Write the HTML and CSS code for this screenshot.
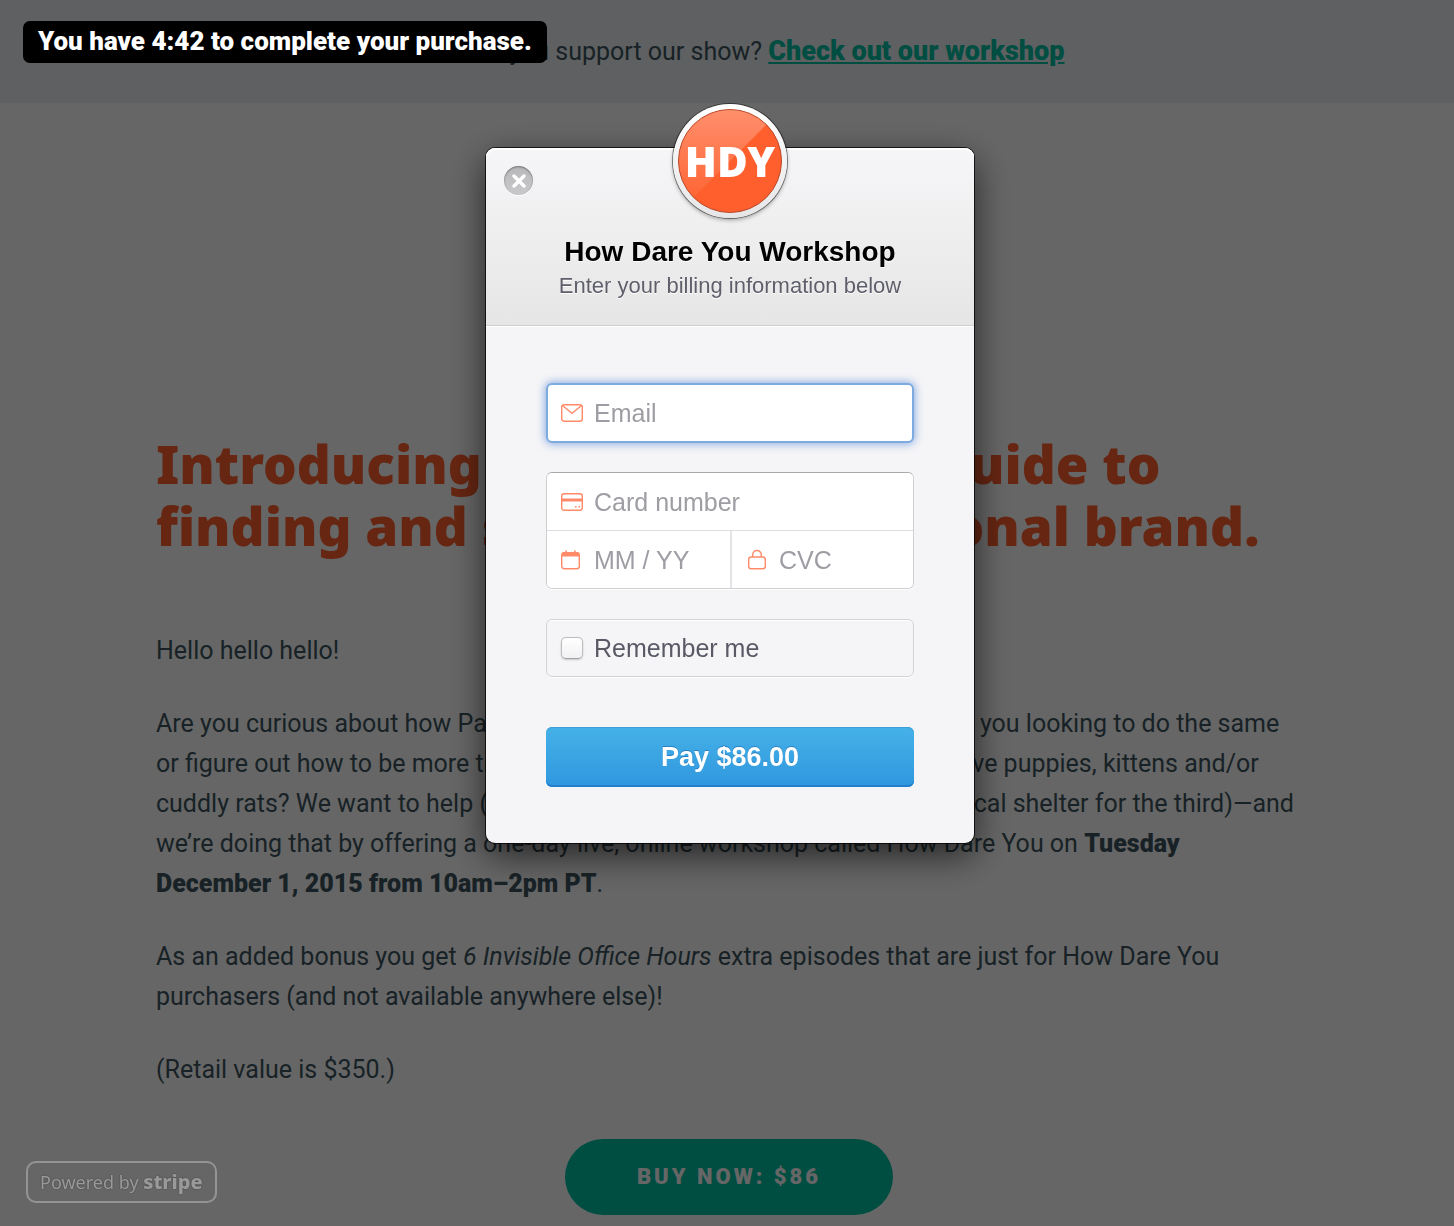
FILE: index.html
```html
<!DOCTYPE html>
<html lang="en">
<head>
<meta charset="utf-8">
<meta name="viewport" content="width=device-width, initial-scale=1">
<title>How Dare You Workshop</title>
<link rel="stylesheet" href="styles.css">
</head>
<body>
<header class="promo">
  <p>When can you support our show? <a href="#workshop">Check out our workshop</a></p>
</header>
<main class="content" id="workshop">
  <h1>Introducing your affordable guide to<br>finding and setting your personal brand.</h1>
  <p>Hello hello hello!</p>
  <p>Are you curious about how Paul and Jason built their own fair brands? Are you looking to do the same<br>
  or figure out how to be more true to yourself online? Or do you even just love puppies, kittens and/or<br>
  cuddly rats? We want to help (with the first two, then please go see your local shelter for the third)—and<br>
  we’re doing that by offering a one-day live, online workshop called How Dare You on <strong>Tuesday<br>
  December 1, 2015 from 10am–2pm PT</strong>.</p>
  <p>As an added bonus you get <em>6 Invisible Office Hours</em> extra episodes that are just for How Dare You<br>
  purchasers (and not available anywhere else)!</p>
  <p>(Retail value is $350.)</p>
  <button class="buy" type="button">BUY NOW: $86</button>
</main>

<div class="overlay">
  <section class="dialog" role="dialog" aria-modal="true" aria-labelledby="dialog-title">
    <div class="dialog-head">
      <button class="close" type="button" aria-label="Close">
        <svg width="14" height="14" viewBox="0 0 14 14"><path d="M2 2l10 10M12 2L2 12" stroke="#fff" stroke-width="3.400" stroke-linecap="round"/></svg>
      </button>
      <div class="logo">
        <svg class="logo-disc" width="104" height="104" viewBox="0 0 104 104" aria-hidden="true">
          <defs>
            <linearGradient id="glare" x1="0" y1="0" x2="0" y2="1">
              <stop offset="0" stop-color="#fff" stop-opacity=".3"/>
              <stop offset="1" stop-color="#fff" stop-opacity="0"/>
            </linearGradient>
            <clipPath id="disc"><circle cx="52" cy="52" r="51"/></clipPath>
          </defs>
          <circle cx="52" cy="52" r="51.500" fill="#ff5f2d" stroke="#b8492a"/>
          <path d="M0 0H104L0 104Z" fill="url(#glare)" clip-path="url(#disc)"/>
        </svg>
        <span class="logo-text">HDY</span>
      </div>
      <h2 id="dialog-title">How Dare You Workshop</h2>
      <p>Enter your billing information below</p>
    </div>
    <form class="dialog-body">
      <label class="field field-focus">
        <svg width="22" height="22" viewBox="0 0 22 22" aria-hidden="true"><g fill="none" stroke="#ff8a6a" stroke-width="1.400"><rect x=".7" y="2.700" width="20.600" height="16.600" rx="2.500"/><path d="M1.500 3.500L11 11.300L20.500 3.500"/></g></svg>
        <input type="email" placeholder="Email" aria-label="Email">
      </label>
      <div class="card-group">
        <label class="field">
          <svg width="22" height="22" viewBox="0 0 22 22" aria-hidden="true"><rect x=".7" y="2.700" width="20.600" height="16.600" rx="2.500" fill="none" stroke="#ff8a6a" stroke-width="1.400"/><path d="M1 7.500h20v3H1zM14 15h1.600v1.600H14zM17.500 15h1.600v1.600h-1.600z" fill="#ff8a6a"/></svg>
          <input type="text" placeholder="Card number" aria-label="Card number">
        </label>
        <div class="card-row">
          <label class="field">
            <svg width="22" height="22" viewBox="0 0 22 22" aria-hidden="true"><rect x=".7" y="3.700" width="17.600" height="16" rx="2.500" fill="none" stroke="#ff8a6a" stroke-width="1.400"/><path d="M.5 7.500V5.500Q.5 3 3 3H4.300V1.500h1.600V3.800h7.200V1.500h1.600V3H16q2.500 0 2.500 2.500v2z" fill="#ff8a6a"/></svg>
            <input type="text" placeholder="MM / YY" aria-label="Expiry date">
          </label>
          <label class="field">
            <svg width="22" height="22" viewBox="0 0 22 22" aria-hidden="true"><g fill="none" stroke="#ff8a6a" stroke-width="1.400"><rect x="2.700" y="8" width="16.600" height="11.700" rx="2.500"/><path d="M6.700 8V5.800a4.300 4.300 0 0 1 8.600 0V8"/></g></svg>
            <input type="text" placeholder="CVC" aria-label="CVC">
          </label>
        </div>
      </div>
      <label class="remember"><input type="checkbox">Remember me</label>
      <button class="pay" type="submit">Pay $86.00</button>
    </form>
  </section>
  <a class="powered" href="#stripe">Powered by <strong>stripe</strong></a>
</div>
<div class="timer" role="status">You have 4:42 to complete your purchase.</div>
</body>
</html>
```
FILE: styles.css
```css
* { box-sizing: border-box; }

body {
  margin: 0;
  background: #fff;
  color: #3e5660;
  font: 25px/40px Roboto, sans-serif;
}

h1, h2, p { margin: 0; }

/* Page */
.promo {
  padding: 31px 20px 31px 24px;
  background: #ebf0f3;
  text-align: center;
}
.promo a {
  color: #00c0a5;
  font-size: 27px;
  font-weight: 900;
}

.content {
  max-width: 1150px;
  margin: 0 auto;
  padding: 330px 0 10px 4px;
}
.content h1 {
  margin-bottom: 74px;
  color: #ff5f2d;
  font: 900 53px/62px "Noto Sans", sans-serif;
}
.content p { margin-bottom: 33px; }
.content strong { font-weight: 900; }

.buy {
  display: block;
  width: 328px;
  height: 76px;
  margin: 49px auto 0;
  border: 0;
  border-radius: 38px;
  background: #00c0a5;
  color: #fff;
  font: 900 22px/28px Roboto, sans-serif;
  letter-spacing: 3px;
}

/* Checkout */
.overlay {
  position: fixed;
  inset: 0;
  display: flex;
  justify-content: center;
  align-items: flex-start;
  padding: 148px 0 0 6px;
  background: rgba(0, 0, 0, .6);
  font-family: "Liberation Sans", Arial, sans-serif;
}

.dialog {
  width: 488px;
  border-radius: 9px;
  background: #f5f5f7;
  box-shadow: 0 0 0 1px rgba(0, 0, 0, .75), 0 12px 36px rgba(0, 0, 0, .65);
}

.dialog-head {
  position: relative;
  padding: 87px 20px 23px;
  border-bottom: 1px solid #cfcfd0;
  border-radius: 9px 9px 0 0;
  background: linear-gradient(#f6f6f8, #e6e6e6);
  box-shadow: inset 0 2px 0 #fff, 0 1px 0 #fff;
  text-align: center;
  text-shadow: 0 1px 0 #fff;
}
.dialog-head h2 {
  color: #000;
  font-size: 28px;
  line-height: 34px;
}
.dialog-head p {
  color: #5f5f6b;
  font-size: 22px;
  line-height: 33px;
}

.close {
  position: absolute;
  top: 18px;
  left: 18px;
  display: flex;
  align-items: center;
  justify-content: center;
  width: 29px;
  height: 29px;
  padding: 0;
  border: 0;
  border-radius: 50%;
  background: linear-gradient(#b8b8ba, #c9c9cb);
  box-shadow: inset 0 1px 2px rgba(0, 0, 0, .4), 0 1px 0 #fff;
}

.logo {
  position: absolute;
  top: -44px;
  left: 50%;
  display: grid;
  place-items: center;
  width: 114px;
  height: 114px;
  margin-left: -57px;
  border-radius: 50%;
  background: linear-gradient(#fff, #e6e6e8);
  box-shadow: 0 0 0 1px rgba(0, 0, 0, .45), 0 2px 4px rgba(0, 0, 0, .35);
}
.logo-disc, .logo-text { grid-area: 1 / 1; }
.logo-text {
  color: #fff;
  font: 900 42px/48px "Noto Sans", sans-serif;
  text-shadow: none;
}

.dialog-body { padding: 57px 60px 56px; }

.field {
  display: flex;
  align-items: center;
  gap: 11px;
  height: 57px;
  padding: 0 14px;
  background: #fff;
}
.field svg { flex: none; }
.field input {
  flex: 1;
  min-width: 0;
  padding: 0;
  border: 0;
  outline: 0;
  background: none;
  color: #333;
  font: 25px/32px "Liberation Sans", Arial, sans-serif;
}
.field input::placeholder { color: #9d9da4; opacity: 1; }

.field-focus {
  height: 60px;
  padding: 0 13px;
  border: 2px solid #7dabe0;
  border-radius: 6px;
  box-shadow: 0 0 8px 1px rgba(80, 130, 210, .65);
}

.card-group {
  margin: 29px 0 30px;
  overflow: hidden;
  border: 1px solid #cfcfd2;
  border-top-color: #aaaaad;
  border-radius: 6px;
  box-shadow: 0 1px 0 #fff;
}
.card-row {
  display: grid;
  grid-template-columns: repeat(2, minmax(0, 1fr));
  border-top: 1px solid #dedee0;
}
.card-row .field + .field { border-left: 2px solid #e4e4e6; }

.remember {
  display: flex;
  align-items: center;
  gap: 11px;
  height: 58px;
  padding: 0 14px;
  border: 1px solid #d3d3d6;
  border-radius: 6px;
  box-shadow: 0 1px 0 #fff, inset 0 1px 0 #fff;
  color: #5a5a66;
  font-size: 25px;
  line-height: 32px;
}
.remember input {
  appearance: none;
  width: 22px;
  height: 22px;
  margin: 0;
  border: 1px solid #bdbdc0;
  border-bottom-color: #a2a2a5;
  border-radius: 5px;
  background: linear-gradient(#fff, #f1f1f3);
  box-shadow: 0 1px 2px rgba(0, 0, 0, .2);
}

.pay {
  display: block;
  width: 100%;
  height: 60px;
  margin-top: 50px;
  border: 0;
  border-radius: 6px;
  background: linear-gradient(#45b1e8, #3097de);
  box-shadow: inset 0 1px 0 #3d9fd8, inset 0 -2px 0 #2280cf;
  color: #fff;
  font: bold 27px/32px "Liberation Sans", Arial, sans-serif;
  text-shadow: 0 -1px 0 rgba(0, 60, 130, .35);
}

.powered {
  position: absolute;
  bottom: 23px;
  left: 26px;
  padding: 5px 12px;
  border: 2px solid #949494;
  border-radius: 10px;
  color: #999;
  font: 18px/28px "Noto Sans", sans-serif;
  text-decoration: none;
  text-shadow: 0 0 2px rgba(0, 0, 0, .4);
}
.powered strong { font-size: 20px; font-weight: 800; }

.timer {
  position: fixed;
  top: 21px;
  left: 23px;
  padding: 4px 15px 6px;
  border-radius: 7px;
  background: #000;
  color: #fff;
  font: 900 26px/32px Roboto, sans-serif;
}
```
